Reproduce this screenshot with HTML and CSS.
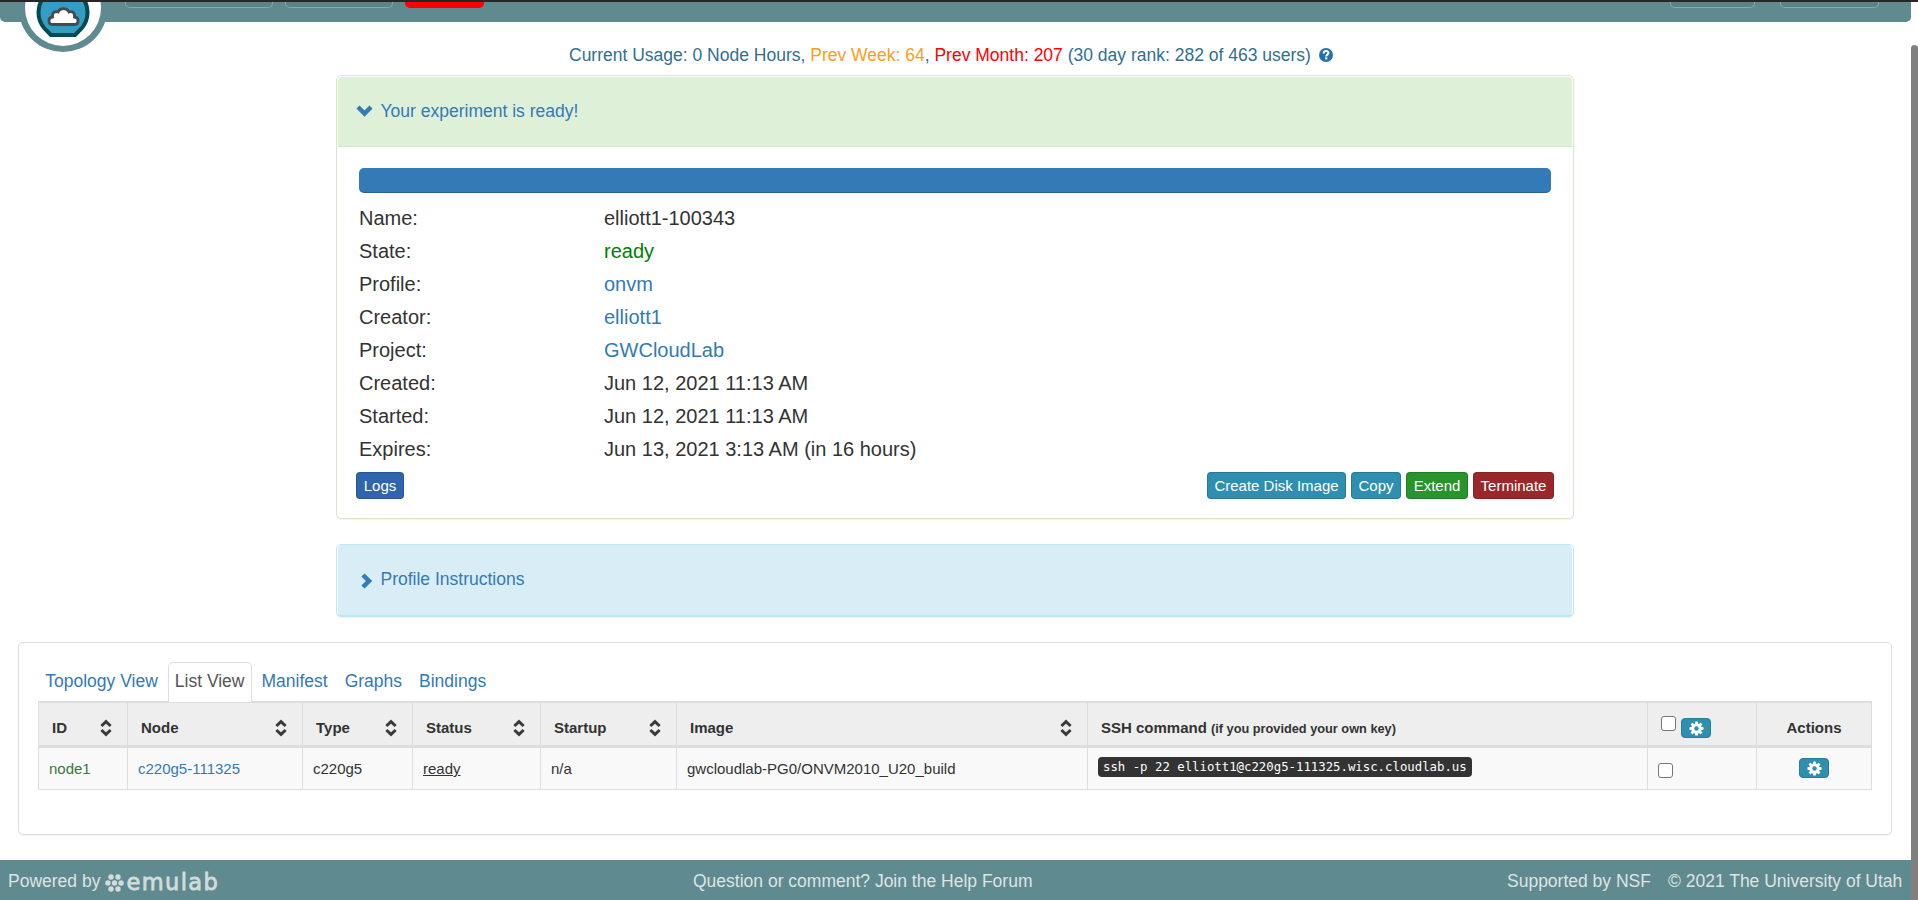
FILE: index.html
```html
<!DOCTYPE html>
<html lang="en">
<head>
<meta charset="utf-8">
<title>Experiment Status</title>
<link rel="stylesheet" href="styles.css">
</head>
<body>
<svg class="defs" width="0" height="0">
  <symbol id="gear" viewBox="0 0 16 16"><g fill="#fff"><rect x="6.5" y="0.5" width="3" height="15" rx=".6"/><rect x="6.5" y="0.5" width="3" height="15" rx=".6" transform="rotate(45 8 8)"/><rect x="6.5" y="0.5" width="3" height="15" rx=".6" transform="rotate(90 8 8)"/><rect x="6.5" y="0.5" width="3" height="15" rx=".6" transform="rotate(135 8 8)"/><circle cx="8" cy="8" r="5.6"/></g><circle cx="8" cy="8" r="2.4" fill="#2f8fae"/></symbol>
  <symbol id="sort" viewBox="0 0 12 18"><path d="M1.4 7L6 2.600l4.600 4.400M1.400 11L6 15.400l4.600-4.400" fill="none" stroke="#3a3a3a" stroke-width="3"/></symbol>
</svg>
<div class="page">
  <header class="navbar">
    <span class="nav-btn nav-start"></span><span class="nav-btn nav-help"></span><span class="nav-btn nav-alert"></span>
    <span class="nav-btn nav-user"></span><span class="nav-btn nav-logout"></span>
    <svg class="brand" width="90" height="50" viewBox="0 2 90 50">
      <circle cx="45" cy="7.5" r="44.5" fill="#5f8a8f"/>
      <circle cx="45" cy="8" r="38" fill="#fff"/>
      <path d="M33 35L26.500 28.500A24.500 24.500 0 1 1 63.500 28.500L57 35Z" fill="#349dc5" stroke="#044a50" stroke-width="4"/>
      <path d="M34.500 24.500C30 24.500 29.500 17.500 34.500 17C34 12.500 37 11 40 12C42 7.500 49 7.500 51 12C54 11 57 12.500 56.500 17C61.500 17.500 61 24.500 56.500 24.500Z" fill="#fff" stroke="#474a4c" stroke-width="2.800"/>
    </svg>
  </header>
  <main>
    <p class="usage"><span class="usage-text">Current Usage: 0 Node Hours, <span class="orange">Prev Week: 64</span>, <span class="red">Prev Month: 207</span> (30 day rank: 282 of 463 users)</span><svg width="14" height="14" viewBox="0 0 14 14"><circle cx="7" cy="7" r="7" fill="#286fae"/><path d="M4.700 5.400C4.700 2.200 9.600 2.400 9.400 5.100C9.300 6.600 7.200 6.700 7.200 8.500" fill="none" stroke="#fff" stroke-width="2"/><rect x="6.100" y="9.400" width="2.200" height="2" fill="#fff"/></svg></p>
    <section class="panel success">
      <h2 class="heading"><svg width="17" height="14" viewBox="0 0 17 14"><path d="M2 3l6.500 6.500L15 3" fill="none" stroke="#337ab7" stroke-width="4.500"/></svg><a>Your experiment is ready!</a></h2>
      <div class="panel-body">
        <div class="progress"></div>
        <dl class="info">
          <dt>Name:</dt><dd>elliott1-100343</dd>
          <dt>State:</dt><dd class="green">ready</dd>
          <dt>Profile:</dt><dd><a>onvm</a></dd>
          <dt>Creator:</dt><dd><a>elliott1</a></dd>
          <dt>Project:</dt><dd><a>GWCloudLab</a></dd>
          <dt>Created:</dt><dd>Jun 12, 2021 11:13 AM</dd>
          <dt>Started:</dt><dd>Jun 12, 2021 11:13 AM</dd>
          <dt>Expires:</dt><dd>Jun 13, 2021 3:13 AM (in 16 hours)</dd>
        </dl>
        <div class="actions"><button class="btn logs">Logs</button><button class="btn disk">Create Disk Image</button><button class="btn copy">Copy</button><button class="btn extend">Extend</button><button class="btn terminate">Terminate</button></div>
      </div>
    </section>
    <section class="panel instructions">
      <h2 class="heading"><svg width="17" height="18" viewBox="0 0 17 18"><path d="M7 3l6 6-6 6" fill="none" stroke="#337ab7" stroke-width="4.500"/></svg><a>Profile Instructions</a></h2>
    </section>
    <section class="panel views">
      <nav class="tabs"><a>Topology View</a><a class="active">List View</a><a>Manifest</a><a>Graphs</a><a>Bindings</a></nav>
      <table>
        <colgroup><col class="c-id"><col class="c-node"><col class="c-type"><col class="c-status"><col class="c-startup"><col class="c-image"><col class="c-ssh"><col class="c-check"><col class="c-act"></colgroup>
        <thead><tr>
          <th><div class="th">ID<svg><use href="#sort"/></svg></div></th>
          <th><div class="th">Node<svg><use href="#sort"/></svg></div></th>
          <th><div class="th">Type<svg><use href="#sort"/></svg></div></th>
          <th><div class="th">Status<svg><use href="#sort"/></svg></div></th>
          <th><div class="th">Startup<svg><use href="#sort"/></svg></div></th>
          <th><div class="th">Image<svg><use href="#sort"/></svg></div></th>
          <th><div class="ssh-head">SSH command <small>(if you provided your own key)</small></div></th>
          <th><div class="check-head"><span class="box"></span><button class="gear"><svg><use href="#gear"/></svg></button></div></th>
          <th class="center">Actions</th>
        </tr></thead>
        <tbody><tr>
          <td class="node">node1</td><td><a>c220g5-111325</a></td><td>c220g5</td><td><u>ready</u></td><td>n/a</td><td>gwcloudlab-PG0/ONVM2010_U20_build</td>
          <td class="ssh"><kbd>ssh -p 22 elliott1@c220g5-111325.wisc.cloudlab.us</kbd></td>
          <td class="check"><span class="box"></span></td>
          <td class="act"><button class="gear"><svg><use href="#gear"/></svg></button></td>
        </tr></tbody>
      </table>
    </section>
  </main>
  <footer>
    <div class="powered"><span>Powered by</span><svg width="19" height="18" viewBox="0 0 19 18" fill="#d3dcdd"><circle cx="9.500" cy="9" r="2.700"/><circle cx="2.900" cy="9" r="2.700"/><circle cx="16.100" cy="9" r="2.700"/><circle cx="6" cy="3" r="2.700"/><circle cx="13" cy="3" r="2.700"/><circle cx="6" cy="15" r="2.700"/><circle cx="13" cy="15" r="2.700"/></svg><span class="emulab">emulab</span></div>
    <div class="forum">Question or comment? Join the Help Forum</div>
    <div class="legal"><span>Supported by NSF</span><span>© 2021 The University of Utah</span></div>
  </footer>
</div>
<div class="scroll"><div class="thumb"></div></div>
</body>
</html>
```
FILE: styles.css
```css
* { box-sizing: border-box; }
body { margin: 0; height: 900px; overflow: hidden; display: flex; background: #fff; color: #333; font: 17.5px/25px "Liberation Sans", Arial, sans-serif; }
.defs { position: absolute; }
a { color: #337ab7; }
.page { width: 1911px; height: 900px; display: flex; flex-direction: column; }
.navbar { position: relative; height: 22px; flex: none; display: flex; padding-left: 125px; background: #5f8a8f; border-top: 2px solid #272727; border-radius: 0 0 5px 5px; }
.nav-btn { height: 6px; border: 1px solid #86a9ad; border-top: 0; border-radius: 0 0 5px 5px; background: #5a8388; }
.nav-start { width: 148px; }
.nav-help { width: 108px; margin-left: 12px; }
.nav-alert { width: 79px; margin-left: 12px; background: #f00; border-color: #f00; }
.nav-user { width: 85px; margin-left: auto; }
.nav-logout { width: 99px; margin: 0 32px 0 25px; }
.brand { position: absolute; left: 18px; top: 0; }
main { flex: 1; }
.usage { display: flex; align-items: center; height: 53px; margin: 0; padding: 13px 0 0 569px; color: #31708f; line-height: 20px; }
.usage-text { width: 749px; white-space: pre; }
.usage svg { margin-left: 1px; }
.usage .orange { color: #ff9c1a; }
.usage .red { color: #f00; }
.panel { width: 1238px; margin-left: 336px; border: 1px solid #ddd; border-radius: 5px; background: #fff; box-shadow: 0 1px 1px rgba(0,0,0,.05); }
.success { height: 444px; padding: 1px; border-color: #d6e9c6; }
.heading { display: flex; align-items: center; margin: 0; padding-left: 18px; font-size: 17.5px; font-weight: 400; border-radius: 4px 4px 0 0; }
.heading svg { margin-right: 7.5px; }
.heading a { padding-top: 2px; }
.success .heading { height: 70px; padding-bottom: 2px; background: #dff0d8; border-bottom: 1px solid #d6e9c6; }
.panel-body { padding: 21px 18px 0 21px; }
.progress { width: 1192px; height: 25px; background: #337ab7; border-radius: 5px; box-shadow: inset 0 -1px 0 rgba(0,0,0,.2); }
.info { display: grid; grid-template-columns: 245px 1fr; grid-auto-rows: 33px; margin: 8px 0 0; font-size: 20px; line-height: 34px; }
.info dd { margin: 0; }
.green { color: green; }
.actions { display: flex; gap: 5px; margin: 7px 0 0 -3px; }
.btn { height: 27px; padding: 0; border: 1px solid rgba(0,0,0,.15); border-radius: 4px; color: #fff; font: 15px/24px "Liberation Sans", Arial, sans-serif; }
.logs { width: 48px; margin-right: auto; background: #2f65ae; }
.disk { width: 139px; background: #2f8fb0; }
.copy { width: 50px; background: #2f8fb0; }
.extend { width: 62px; background: #28942b; }
.terminate { width: 81px; background: #9a282a; }
.instructions { height: 73px; margin-top: 25px; padding: 0 1px; border-color: #bce8f1; }
.instructions .heading { height: 71px; padding-bottom: 3px; background: #d9edf7; border-bottom: 1px solid #bce8f1; }
.instructions svg { margin-top: 4px; }
.views { width: 1874px; height: 193px; margin: 25px 0 0 18px; padding: 19px 19px 0; }
.tabs { display: flex; height: 39px; }
.tabs a { height: 40px; flex: none; margin-right: 2.5px; padding: 6px 6.25px 0; line-height: 25px; white-space: nowrap; border: 1px solid transparent; border-bottom: 0; }
.tabs .active { position: relative; z-index: 1; color: #555; background: #fff; border-color: #ddd; border-radius: 5px 5px 0 0; }
table { width: 1834px; border-collapse: separate; border-spacing: 0; table-layout: fixed; border: 1px solid #ddd; border-width: 2px 1px 1px 0; font-size: 15px; line-height: 20px; }
.c-id { width: 89px; } .c-node { width: 175px; } .c-type { width: 110px; } .c-status { width: 128px; } .c-startup { width: 136px; } .c-image { width: 411px; } .c-ssh { width: 560px; } .c-check { width: 109px; }
th, td { border-left: 1px solid #ddd; text-align: left; white-space: nowrap; }
th { height: 45px; padding: 8px 0 0 13px; background: #eee; border-bottom: 3px solid #ddd; }
td { height: 41px; padding: 1px 0 0 10px; background: #f9f9f9; }
.th { display: flex; justify-content: space-between; align-items: center; padding-right: 15px; }
.th svg { width: 12px; height: 18px; margin-top: -1px; }
small { font-size: 12.75px; }
th.center { text-align: center; padding-left: 0; }
.node { color: #3c763d; }
kbd { display: block; width: 374px; height: 20px; padding: 0 5px; border-radius: 4px; background: #333; color: #fff; font: 12.33px/21px "DejaVu Sans Mono", monospace; }
td.ssh { padding: 0 0 4px 10px; }
.box { display: block; width: 15px; height: 15px; border: 1px solid #767676; border-radius: 3px; background: #fff; }
.check-head { display: flex; gap: 5px; }
.check-head .box { margin-top: -2px; }
.check .box { margin-top: 3px; }
.gear { display: flex; align-items: center; justify-content: center; width: 30px; height: 20px; padding: 0; border: 1px solid #287c99; border-radius: 4px; background: #2f8fae; }
.gear svg { width: 15px; height: 15px; }
td.act { padding: 0; }
.act .gear { margin: -1px auto 0; }
footer { height: 40px; flex: none; display: grid; grid-template-columns: 693px 1fr 405px; padding-top: 9px; background: #5f8a8f; color: #dde4e4; white-space: nowrap; }
.powered { display: flex; padding-left: 8px; }
.powered svg { margin: 5px 2px 0 5px; }
.emulab { margin-top: -1px; font-family: "DejaVu Sans", sans-serif; font-size: 22.5px; line-height: 29px; letter-spacing: 1.4px; color: #d3dcdd; -webkit-text-stroke: .8px #d3dcdd; }
.legal { display: flex; gap: 17px; padding-left: 1px; }
.scroll { width: 7px; height: 900px; border-top: 2px solid #272727; padding-top: 43px; }
.thumb { height: 857px; background: #808080; border-radius: 4px 4px 0 0; }
```
